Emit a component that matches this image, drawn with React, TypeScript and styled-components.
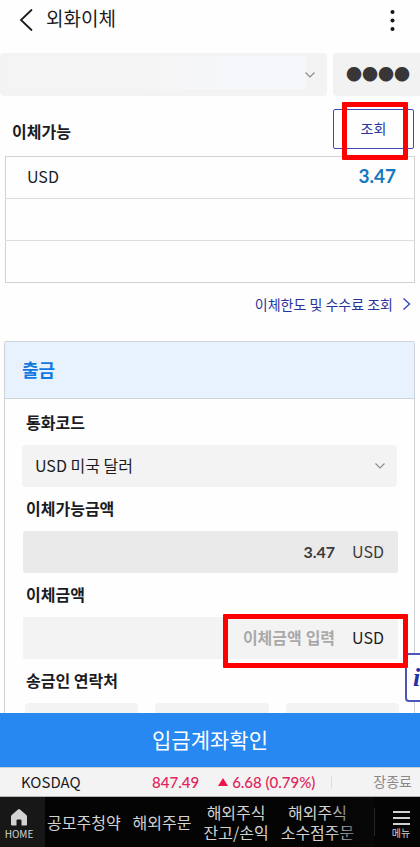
import React from "react";
import styled, { createGlobalStyle, css } from "styled-components";

const KR = `"Noto Sans CJK KR", sans-serif`;
const NUM = `Lato, "Noto Sans CJK KR", sans-serif`;
const NAVY = "#28349c";

const GlobalStyle = createGlobalStyle`
  * { box-sizing: border-box; }
  body { margin: 0; background: #fefefe; font-family: ${KR}; color: #1c1c1e; }
  button, input, select { font: inherit; color: inherit; border: 0; margin: 0; padding: 0; background: none; border-radius: 0; outline: 0; }
  button { cursor: pointer; }
`;

const Page = styled.div`
  display: flex;
  flex-direction: column;
  height: 100vh;
  overflow: hidden;
`;

const Content = styled.div`
  position: relative;
  flex: 1;
  min-height: 0;
  overflow: hidden;
`;

const Scroll = styled.main`
  height: 100%;
  overflow-y: auto;
  overflow-x: hidden;
  scrollbar-width: none;
`;

const Header = styled.header`
  display: flex;
  align-items: center;
  height: 39px;
  margin-bottom: 14px;
  padding: 0 18px;
`;

const IconButton = styled.button`
  display: flex;
  align-items: center;
  justify-content: center;
`;

const Title = styled.h1`
  flex: 1;
  margin: 0 0 0 11px;
  padding-bottom: 3px;
  font-size: 19px;
  line-height: 28px;
  font-weight: 400;
`;

const AccountRow = styled.div`
  display: grid;
  grid-template-columns: minmax(0, 1fr) 87px;
  gap: 6px;
`;

const SelectBox = styled.div`
  display: grid;
  align-items: center;
  background: #f3f3f3;
  border-radius: 4px;
  > * { grid-area: 1 / 1; }
  > svg { justify-self: end; margin-right: 11px; pointer-events: none; }
`;

const Select = styled.select<{ $hidden?: boolean }>`
  appearance: none;
  width: 100%;
  height: ${(p) => (p.$hidden ? 43 : 42)}px;
  padding: 0 36px 2px 13px;
  font-size: 16px;
  ${(p) =>
    p.$hidden &&
    css`
      padding: 3px 21px 7px 7px;
      background: linear-gradient(90deg, #f5f5f5 40%, #f6f7fa 75%) content-box;
    `}
`;

const Pin = styled.input`
  width: 100%;
  height: 43px;
  padding: 0 0 3px 13px;
  background: #f2f2f2;
  border-radius: 4px 0 0 4px;
  color: #383636;
  font-size: 16px;
`;

const AvailableHead = styled.div`
  display: flex;
  align-items: center;
  justify-content: space-between;
  padding: 13px 6px 7px 12px;
`;

const SectionTitle = styled.h2`
  margin: 4px 0 0;
  font-size: 16px;
  line-height: 24px;
  font-weight: 700;
`;

const Marked = styled.div`
  position: relative;
`;

const RedFrame = styled.span<{ $inset: string; $width?: string }>`
  position: absolute;
  inset: ${(p) => p.$inset};
  z-index: 3;
  width: ${(p) => p.$width ?? "auto"};
  border: 5px solid #ff0000;
  border-radius: 1px;
  pointer-events: none;
`;

const LookupButton = styled.button`
  display: block;
  width: 81px;
  height: 40px;
  padding-bottom: 3px;
  border: 1px solid #3e49b4;
  border-radius: 2px;
  color: ${NAVY};
  font-size: 14px;
`;

const BalanceTable = styled.table`
  width: calc(100% - 10px);
  margin: 0 5px;
  border-collapse: collapse;
  border: 1px solid #d2d2d2;
  tr + tr { border-top: 1px solid #dddddd; }
  tr { height: 42px; }
  th, td { padding: 0 0 3px; line-height: 24px; }
  th { padding-left: 21px; text-align: left; font-size: 16px; font-weight: 400; }
  td { padding-right: 18px; text-align: right; font-family: ${NUM}; font-size: 19px; font-weight: 700; color: #1478c0; }
`;

const LimitRow = styled.div`
  display: flex;
  justify-content: flex-end;
  padding: 10px 9px 26px;
`;

const LimitLink = styled.a`
  display: flex;
  align-items: center;
  gap: 9px;
  color: ${NAVY};
  font-size: 14px;
  line-height: 22px;
  text-decoration: none;
`;

const Card = styled.section`
  margin: 0 5px 20px 4px;
  border: 1px solid #cfd3d8;
  border-radius: 2px;
`;

const CardTitle = styled.h2`
  margin: 0;
  padding: 14px 17px 15px;
  background: #e7f2fe;
  border-bottom: 1px solid #cfd3d8;
  color: #1179e0;
  font-size: 18px;
  line-height: 27px;
  font-weight: 700;
`;

const CardBody = styled.div`
  padding: 2px 17px 20px;
`;

const Label = styled.label`
  display: block;
  padding: 0 0 2px 4px;
  font-size: 16px;
  line-height: 42px;
  font-weight: 700;
`;

const AmountBox = styled.div<{ $readOnly?: boolean }>`
  position: relative;
  display: flex;
  align-items: center;
  height: 42px;
  margin: 0 -1px 0 1px;
  padding-right: 14px;
  background: ${(p) => (p.$readOnly ? "#eaeaea" : "#f3f3f3")};
  color: ${(p) => (p.$readOnly ? "#3c3a3c" : "#1c1c1e")};
  border-radius: 2px;
`;

const AmountInput = styled.input`
  flex: 1;
  min-width: 0;
  height: 42px;
  padding-bottom: 2px;
  text-align: right;
  font-family: ${NUM};
  font-size: 16px;
  font-weight: 700;
  &::placeholder { color: #aaa9aa; opacity: 1; }
`;

const Unit = styled.span`
  margin-left: 17px;
  padding-bottom: 2px;
  font-size: 16px;
  line-height: 24px;
`;

const PhoneRow = styled.div`
  display: grid;
  grid-template-columns: repeat(3, minmax(0, 1fr));
  gap: 17px;
  margin: 0 -2px 0 3px;
`;

const PhoneInput = styled.input`
  width: 100%;
  height: 42px;
  padding: 0 12px;
  background: #f3f3f3;
  border-radius: 4px;
`;

const InfoButton = styled.button`
  position: absolute;
  right: -29px;
  bottom: 11px;
  z-index: 2;
  width: 44px;
  height: 49px;
  padding-left: 6px;
  border: 2px solid #4a56b8;
  border-radius: 4px;
  background: #fefefe;
  color: #2430a4;
  font: italic 700 26px/40px "Liberation Serif", serif;
  text-align: left;
`;

const ConfirmButton = styled.button`
  flex: none;
  height: 54px;
  padding-bottom: 2px;
  background: #2688f0;
  color: #ffffff;
  font-size: 21px;
  line-height: 52px;
`;

const Ticker = styled.div`
  display: flex;
  flex: none;
  align-items: center;
  height: 30px;
  padding: 0 8px 0 21px;
  border-top: 1px solid #c9d0d6;
  border-bottom: 1px solid #b4b6b4;
  background: #f3f3f3;
  font-size: 15px;
  line-height: 24px;
`;

const TickerName = styled.span`
  flex: 1;
`;

const TickerValue = styled.span`
  display: flex;
  align-items: center;
  gap: 4px;
  margin-right: 19px;
  color: #e0245c;
  font-family: ${NUM};
  font-weight: 500;
`;

const TickerChange = styled(TickerValue)`
  margin-right: 16px;
`;

const TickerState = styled.span`
  padding: 0 0 2px 41px;
  color: #8a888a;
  font-size: 14px;
`;

const Rule = styled.span<{ $dark?: boolean }>`
  width: 1px;
  height: ${(p) => (p.$dark ? 28 : 12)}px;
  background: ${(p) => (p.$dark ? "#262626" : "#dcdcdc")};
`;

const Nav = styled.nav`
  display: flex;
  flex: none;
  align-items: center;
  height: 50px;
  background: #040404;
  color: #d2d2d2;
`;

const NavIcon = styled.a<{ $raised?: boolean }>`
  display: flex;
  flex: none;
  flex-direction: column;
  align-items: center;
  justify-content: center;
  gap: 1px;
  width: 45px;
  height: 50px;
  padding: ${(p) => (p.$raised ? "4px 7px 0 0" : "5px 0 0 7px")};
  background: ${(p) => (p.$raised ? "#171717" : "transparent")};
  color: inherit;
  font-size: 10px;
  line-height: 13px;
  text-decoration: none;
`;

const NavLinks = styled.div`
  position: relative;
  display: flex;
  flex: 1;
  align-items: center;
  min-width: 0;
  height: 50px;
  overflow: hidden;
  padding: 0 0 1px 2px;
  gap: 12px;
  &::after {
    content: "";
    position: absolute;
    inset: 0 0 0 auto;
    width: 44px;
    background: linear-gradient(90deg, transparent, #080808);
  }
`;

const NavLink = styled.a`
  flex: none;
  color: inherit;
  font-size: 16px;
  line-height: 20px;
  text-align: center;
  text-decoration: none;
  white-space: pre-line;
`;

const Chevron = () => (
  <svg width="12" height="8" viewBox="0 0 12 8" fill="none" stroke="#8c8c8c" strokeWidth="1.2" aria-hidden="true">
    <path d="M1.5 1.500 6 6l4.500-4.500" />
  </svg>
);

const NAV_ITEMS = ["공모주청약", "해외주문", "해외주식\n잔고/손익", "해외주식\n소수점주문"];

export default function App() {
  return (
    <Page>
      <GlobalStyle />
      <Content>
        <Scroll>
          <Header>
            <IconButton aria-label="뒤로">
              <svg width="17" height="24" viewBox="0 0 17 24" fill="none" stroke="#1c1c1e" strokeWidth="1.8" strokeLinecap="round">
                <path d="M13.500 2 3 12l10.500 10" />
              </svg>
            </IconButton>
            <Title>외화이체</Title>
            <IconButton aria-label="더보기">
              <svg width="19" height="24" viewBox="0 0 19 24" fill="#141414">
                <circle cx="9.500" cy="4" r="2" />
                <circle cx="9.500" cy="12.500" r="2" />
                <circle cx="9.500" cy="21" r="2" />
              </svg>
            </IconButton>
          </Header>

          <AccountRow>
            <SelectBox>
              <Select $hidden aria-label="계좌" defaultValue="">
                <option value="" />
              </Select>
              <Chevron />
            </SelectBox>
            <Pin aria-label="비밀번호" readOnly value="●●●●" />
          </AccountRow>

          <AvailableHead>
            <SectionTitle>이체가능</SectionTitle>
            <Marked>
              <LookupButton>조회</LookupButton>
              <RedFrame $inset="-7px 6px -11px 9px" />
            </Marked>
          </AvailableHead>

          <BalanceTable>
            <tbody>
              <tr>
                <th scope="row">USD</th>
                <td>3.47</td>
              </tr>
              <tr>
                <th />
                <td />
              </tr>
              <tr>
                <th />
                <td />
              </tr>
            </tbody>
          </BalanceTable>

          <LimitRow>
            <LimitLink href="#limit">
              이체한도 및 수수료 조회
              <svg width="9" height="14" viewBox="0 0 9 14" fill="none" stroke="#3f4cb4" strokeWidth="1.5" aria-hidden="true">
                <path d="m1.500 1.500 6 5.500-6 5.500" />
              </svg>
            </LimitLink>
          </LimitRow>

          <Card>
            <CardTitle>출금</CardTitle>
            <CardBody>
              <Label htmlFor="currency">통화코드</Label>
              <SelectBox>
                <Select id="currency" defaultValue="USD">
                  <option value="USD">USD 미국 달러</option>
                </Select>
                <Chevron />
              </SelectBox>

              <Label htmlFor="available">이체가능금액</Label>
              <AmountBox $readOnly>
                <AmountInput id="available" readOnly value="3.47" />
                <Unit>USD</Unit>
              </AmountBox>

              <Label htmlFor="amount">이체금액</Label>
              <AmountBox>
                <AmountInput id="amount" placeholder="이체금액 입력" />
                <Unit>USD</Unit>
                <RedFrame $inset="-3px -10px -9px auto" $width="185px" />
              </AmountBox>

              <Label htmlFor="phone1">송금인 연락처</Label>
              <PhoneRow>
                <PhoneInput id="phone1" />
                <PhoneInput aria-label="연락처 가운데 자리" />
                <PhoneInput aria-label="연락처 끝자리" />
              </PhoneRow>
            </CardBody>
          </Card>
        </Scroll>
        <InfoButton aria-label="안내">i</InfoButton>
      </Content>

      <ConfirmButton>입금계좌확인</ConfirmButton>

      <Ticker>
        <TickerName>KOSDAQ</TickerName>
        <TickerValue>847.49</TickerValue>
        <TickerChange>
          <svg width="10" height="8" viewBox="0 0 10 8" fill="#f0124e" aria-hidden="true">
            <path d="M5 0 10 8H0z" />
          </svg>
          6.68 (0.79%)
        </TickerChange>
        <Rule />
        <TickerState>장종료</TickerState>
      </Ticker>

      <Nav>
        <NavIcon href="#home" $raised>
          <svg width="18" height="17" viewBox="0 0 18 17" fill="#d2d2d2" aria-hidden="true">
            <path d="M9 0Q9.500 0 10 .5l6.300 5.500q.7.600.7 1.500v8q0 1-1 1h-4.500v-5q0-1-1-1h-3q-1 0-1 1v5H2q-1 0-1-1v-8q0-.900.7-1.500L8 .5Q8.500 0 9 0z" />
          </svg>
          HOME
        </NavIcon>
        <NavLinks>
          {NAV_ITEMS.map((label) => (
            <NavLink key={label} href="#menu">
              {label}
            </NavLink>
          ))}
        </NavLinks>
        <Rule $dark />
        <NavIcon href="#all">
          <svg width="17" height="15" viewBox="0 0 17 15" stroke="#d2d2d2" strokeWidth="2" aria-hidden="true">
            <path d="M0 2h17M0 8h17M0 14h17" />
          </svg>
          메뉴
        </NavIcon>
      </Nav>
    </Page>
  );
}
